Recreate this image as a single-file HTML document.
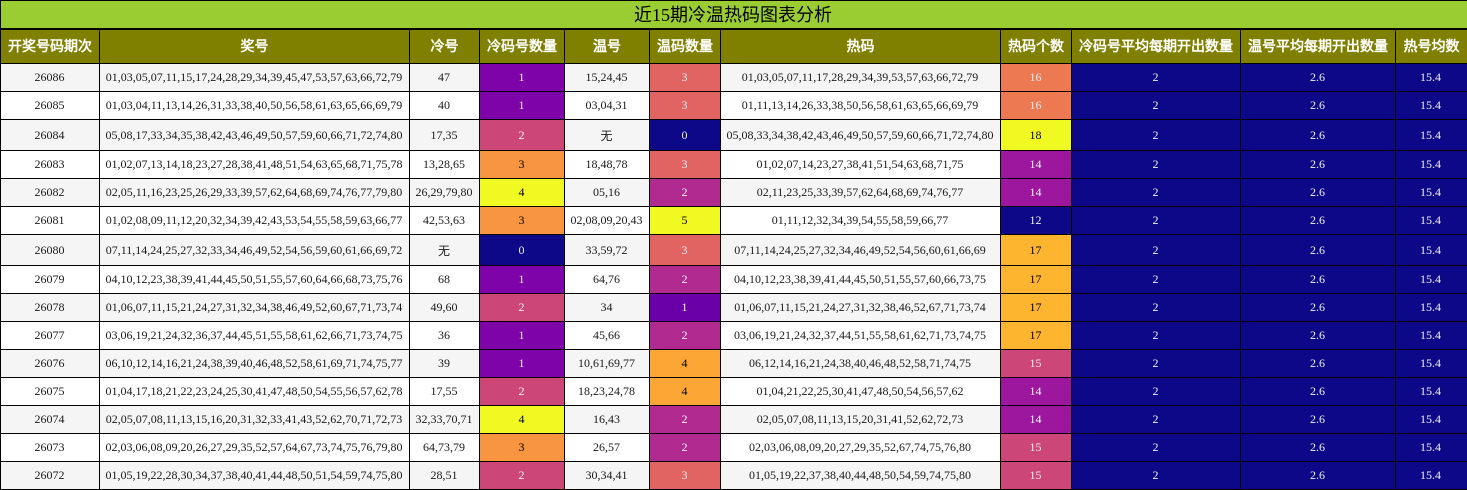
<!DOCTYPE html>
<html lang="zh">
<head>
<meta charset="utf-8">
<title>近15期冷温热码图表分析</title>
<style>
html,body{margin:0;padding:0;background:#fff}
body{width:1467px;height:490px;overflow:hidden}
table{border-collapse:collapse;table-layout:fixed;width:1467px;font-family:"Liberation Serif","WenQuanYi Zen Hei",serif;font-size:12px;color:#1a1a1a}
td,th{padding:0 1px 0 0;text-align:center;vertical-align:middle;white-space:nowrap;overflow:hidden;border:1px solid #000}
td:last-child{padding-right:2px}
th.t{background:#9acd32;font-size:18px;font-weight:normal;color:#000;border-bottom:2px solid #000;padding-right:2px}
th.h{background:#808000;color:#fff;font-size:14px;font-weight:bold;padding-right:0}
tr.g td{background:#f5f5f5}
tr.r{height:28px}
tr.x{height:31px}
td.a{background:#0d0887!important;color:#f1f1f1}
td.b{background:#6a00a8!important;color:#f1f1f1}
td.c{background:#7e03a8!important;color:#f1f1f1}
td.d{background:#9c179e!important;color:#f1f1f1}
td.e{background:#b12a90!important;color:#f1f1f1}
td.f{background:#cc4778!important;color:#f1f1f1}
td.j{background:#e16462!important;color:#f1f1f1}
td.k{background:#ed7953!important;color:#f1f1f1}
td.l{background:#f89540!important;color:#000}
td.m{background:#fca636!important;color:#000}
td.o{background:#fdb42f!important;color:#000}
td.y{background:#f0f921!important;color:#000}
</style>
</head>
<body>
<table>
<colgroup><col style="width:99px"><col style="width:310px"><col style="width:70px"><col style="width:85px"><col style="width:85px"><col style="width:71px"><col style="width:280px"><col style="width:71px"><col style="width:169px"><col style="width:155px"><col style="width:72px"></colgroup>
<thead>
<tr style="height:28px"><th class="t" colspan="11">近15期冷温热码图表分析</th></tr>
<tr style="height:35px"><th class="h">开奖号码期次</th><th class="h">奖号</th><th class="h">冷号</th><th class="h">冷码号数量</th><th class="h">温号</th><th class="h">温码数量</th><th class="h">热码</th><th class="h">热码个数</th><th class="h">冷码号平均每期开出数量</th><th class="h">温号平均每期开出数量</th><th class="h">热号均数</th></tr>
</thead>
<tbody>
<tr class="r g"><td>26086</td><td>01,03,05,07,11,15,17,24,28,29,34,39,45,47,53,57,63,66,72,79</td><td>47</td><td class="c">1</td><td>15,24,45</td><td class="j">3</td><td>01,03,05,07,11,17,28,29,34,39,53,57,63,66,72,79</td><td class="k">16</td><td class="a">2</td><td class="a">2.6</td><td class="a">15.4</td></tr>
<tr class="r"><td>26085</td><td>01,03,04,11,13,14,26,31,33,38,40,50,56,58,61,63,65,66,69,79</td><td>40</td><td class="c">1</td><td>03,04,31</td><td class="j">3</td><td>01,11,13,14,26,33,38,50,56,58,61,63,65,66,69,79</td><td class="k">16</td><td class="a">2</td><td class="a">2.6</td><td class="a">15.4</td></tr>
<tr class="x g"><td>26084</td><td>05,08,17,33,34,35,38,42,43,46,49,50,57,59,60,66,71,72,74,80</td><td>17,35</td><td class="f">2</td><td>无</td><td class="a">0</td><td>05,08,33,34,38,42,43,46,49,50,57,59,60,66,71,72,74,80</td><td class="y">18</td><td class="a">2</td><td class="a">2.6</td><td class="a">15.4</td></tr>
<tr class="r"><td>26083</td><td>01,02,07,13,14,18,23,27,28,38,41,48,51,54,63,65,68,71,75,78</td><td>13,28,65</td><td class="l">3</td><td>18,48,78</td><td class="j">3</td><td>01,02,07,14,23,27,38,41,51,54,63,68,71,75</td><td class="d">14</td><td class="a">2</td><td class="a">2.6</td><td class="a">15.4</td></tr>
<tr class="r g"><td>26082</td><td>02,05,11,16,23,25,26,29,33,39,57,62,64,68,69,74,76,77,79,80</td><td>26,29,79,80</td><td class="y">4</td><td>05,16</td><td class="e">2</td><td>02,11,23,25,33,39,57,62,64,68,69,74,76,77</td><td class="d">14</td><td class="a">2</td><td class="a">2.6</td><td class="a">15.4</td></tr>
<tr class="r"><td>26081</td><td>01,02,08,09,11,12,20,32,34,39,42,43,53,54,55,58,59,63,66,77</td><td>42,53,63</td><td class="l">3</td><td>02,08,09,20,43</td><td class="y">5</td><td>01,11,12,32,34,39,54,55,58,59,66,77</td><td class="a">12</td><td class="a">2</td><td class="a">2.6</td><td class="a">15.4</td></tr>
<tr class="x g"><td>26080</td><td>07,11,14,24,25,27,32,33,34,46,49,52,54,56,59,60,61,66,69,72</td><td>无</td><td class="a">0</td><td>33,59,72</td><td class="j">3</td><td>07,11,14,24,25,27,32,34,46,49,52,54,56,60,61,66,69</td><td class="o">17</td><td class="a">2</td><td class="a">2.6</td><td class="a">15.4</td></tr>
<tr class="r"><td>26079</td><td>04,10,12,23,38,39,41,44,45,50,51,55,57,60,64,66,68,73,75,76</td><td>68</td><td class="c">1</td><td>64,76</td><td class="e">2</td><td>04,10,12,23,38,39,41,44,45,50,51,55,57,60,66,73,75</td><td class="o">17</td><td class="a">2</td><td class="a">2.6</td><td class="a">15.4</td></tr>
<tr class="r g"><td>26078</td><td>01,06,07,11,15,21,24,27,31,32,34,38,46,49,52,60,67,71,73,74</td><td>49,60</td><td class="f">2</td><td>34</td><td class="b">1</td><td>01,06,07,11,15,21,24,27,31,32,38,46,52,67,71,73,74</td><td class="o">17</td><td class="a">2</td><td class="a">2.6</td><td class="a">15.4</td></tr>
<tr class="r"><td>26077</td><td>03,06,19,21,24,32,36,37,44,45,51,55,58,61,62,66,71,73,74,75</td><td>36</td><td class="c">1</td><td>45,66</td><td class="e">2</td><td>03,06,19,21,24,32,37,44,51,55,58,61,62,71,73,74,75</td><td class="o">17</td><td class="a">2</td><td class="a">2.6</td><td class="a">15.4</td></tr>
<tr class="r g"><td>26076</td><td>06,10,12,14,16,21,24,38,39,40,46,48,52,58,61,69,71,74,75,77</td><td>39</td><td class="c">1</td><td>10,61,69,77</td><td class="m">4</td><td>06,12,14,16,21,24,38,40,46,48,52,58,71,74,75</td><td class="f">15</td><td class="a">2</td><td class="a">2.6</td><td class="a">15.4</td></tr>
<tr class="r"><td>26075</td><td>01,04,17,18,21,22,23,24,25,30,41,47,48,50,54,55,56,57,62,78</td><td>17,55</td><td class="f">2</td><td>18,23,24,78</td><td class="m">4</td><td>01,04,21,22,25,30,41,47,48,50,54,56,57,62</td><td class="d">14</td><td class="a">2</td><td class="a">2.6</td><td class="a">15.4</td></tr>
<tr class="r g"><td>26074</td><td>02,05,07,08,11,13,15,16,20,31,32,33,41,43,52,62,70,71,72,73</td><td>32,33,70,71</td><td class="y">4</td><td>16,43</td><td class="e">2</td><td>02,05,07,08,11,13,15,20,31,41,52,62,72,73</td><td class="d">14</td><td class="a">2</td><td class="a">2.6</td><td class="a">15.4</td></tr>
<tr class="r"><td>26073</td><td>02,03,06,08,09,20,26,27,29,35,52,57,64,67,73,74,75,76,79,80</td><td>64,73,79</td><td class="l">3</td><td>26,57</td><td class="e">2</td><td>02,03,06,08,09,20,27,29,35,52,67,74,75,76,80</td><td class="f">15</td><td class="a">2</td><td class="a">2.6</td><td class="a">15.4</td></tr>
<tr class="r g"><td>26072</td><td>01,05,19,22,28,30,34,37,38,40,41,44,48,50,51,54,59,74,75,80</td><td>28,51</td><td class="f">2</td><td>30,34,41</td><td class="j">3</td><td>01,05,19,22,37,38,40,44,48,50,54,59,74,75,80</td><td class="f">15</td><td class="a">2</td><td class="a">2.6</td><td class="a">15.4</td></tr>
</tbody>
</table>
</body>
</html>
